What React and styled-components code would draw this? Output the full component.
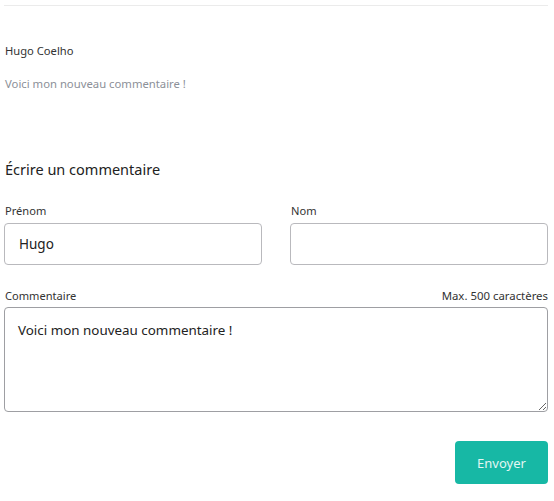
import React from "react";
import styled, { createGlobalStyle } from "styled-components";

const Global = createGlobalStyle`
  html, body { margin: 0; padding: 0; background: #ffffff; }
  body { font-family: "Noto Sans", "Open Sans", Arial, sans-serif; color: #2b2b2b; }
  * { box-sizing: border-box; }
`;

const Page = styled.div`
  width: 544px;
  margin-left: 4px;
  padding-top: 5px;
`;

const Divider = styled.hr`
  margin: 0;
  border: 0;
  height: 1px;
  background: #ebebeb;
`;

const Comment = styled.section`
  margin-top: 37px;
  padding-left: 1px;
`;

const Author = styled.div`
  font-size: 11.2px;
  line-height: 16px;
  color: #333333;
`;

const CommentText = styled.p`
  margin: 17px 0 0;
  font-size: 11.3px;
  line-height: 16px;
  color: #8c9098;
`;

const FormTitle = styled.h3`
  margin: 67px 0 0;
  padding-left: 1px;
  font-size: 14.5px;
  line-height: 20px;
  font-weight: 400;
  color: #222222;
`;

const Grid = styled.div`
  display: grid;
  grid-template-columns: 1fr 1fr;
  column-gap: 28px;
  margin-top: 25px;
`;

const Field = styled.div`
  display: flex;
  flex-direction: column;
`;

const LabelRow = styled.div`
  display: flex;
  justify-content: space-between;
  align-items: center;
  margin-top: ${(p) => p.$top || 0}px;
`;

const Label = styled.label`
  font-size: 11.1px;
  line-height: 14px;
  color: #333333;
  padding-left: 1px;
`;

const Hint = styled.span`
  font-size: 11.4px;
  line-height: 14px;
  color: #333333;
`;

const Input = styled.input`
  display: block;
  width: 100%;
  height: 42px;
  margin-top: 5px;
  padding: 0 14px;
  border: 1px solid #b9b9bd;
  border-radius: 4px;
  font-family: inherit;
  font-size: 13.5px;
  color: #222222;
  background: #fff;
  outline: none;
`;

const TextArea = styled.textarea`
  display: block;
  width: 100%;
  height: 105px;
  margin-top: 4px;
  padding: 12px 13px 11px;
  border: 1px solid #9e9fa3;
  border-radius: 4px;
  font-family: inherit;
  font-size: 13.4px;
  line-height: 20px;
  color: #222222;
  background: #fff;
  resize: vertical;
  outline: none;
`;

const Actions = styled.div`
  display: flex;
  justify-content: flex-end;
  margin-top: 29px;
`;

const SubmitButton = styled.button`
  width: 93px;
  height: 43px;
  border: 0;
  border-radius: 4px;
  background: #17b8a5;
  color: #e3f6f3;
  font-family: inherit;
  font-size: 13px;
  cursor: pointer;
`;

export default function App() {
  return (
    <>
      <Global />
      <Page>
        <Divider />
        <Comment>
          <Author>Hugo Coelho</Author>
          <CommentText>Voici mon nouveau commentaire !</CommentText>
        </Comment>
        <FormTitle>Écrire un commentaire</FormTitle>
        <Grid>
          <Field>
            <Label>Prénom</Label>
            <Input defaultValue="Hugo" />
          </Field>
          <Field>
            <Label>Nom</Label>
            <Input defaultValue="" />
          </Field>
        </Grid>
        <LabelRow $top={24}>
          <Label>Commentaire</Label>
          <Hint>Max. 500 caractères</Hint>
        </LabelRow>
        <TextArea defaultValue="Voici mon nouveau commentaire !" />
        <Actions>
          <SubmitButton type="button">Envoyer</SubmitButton>
        </Actions>
      </Page>
    </>
  );
}
